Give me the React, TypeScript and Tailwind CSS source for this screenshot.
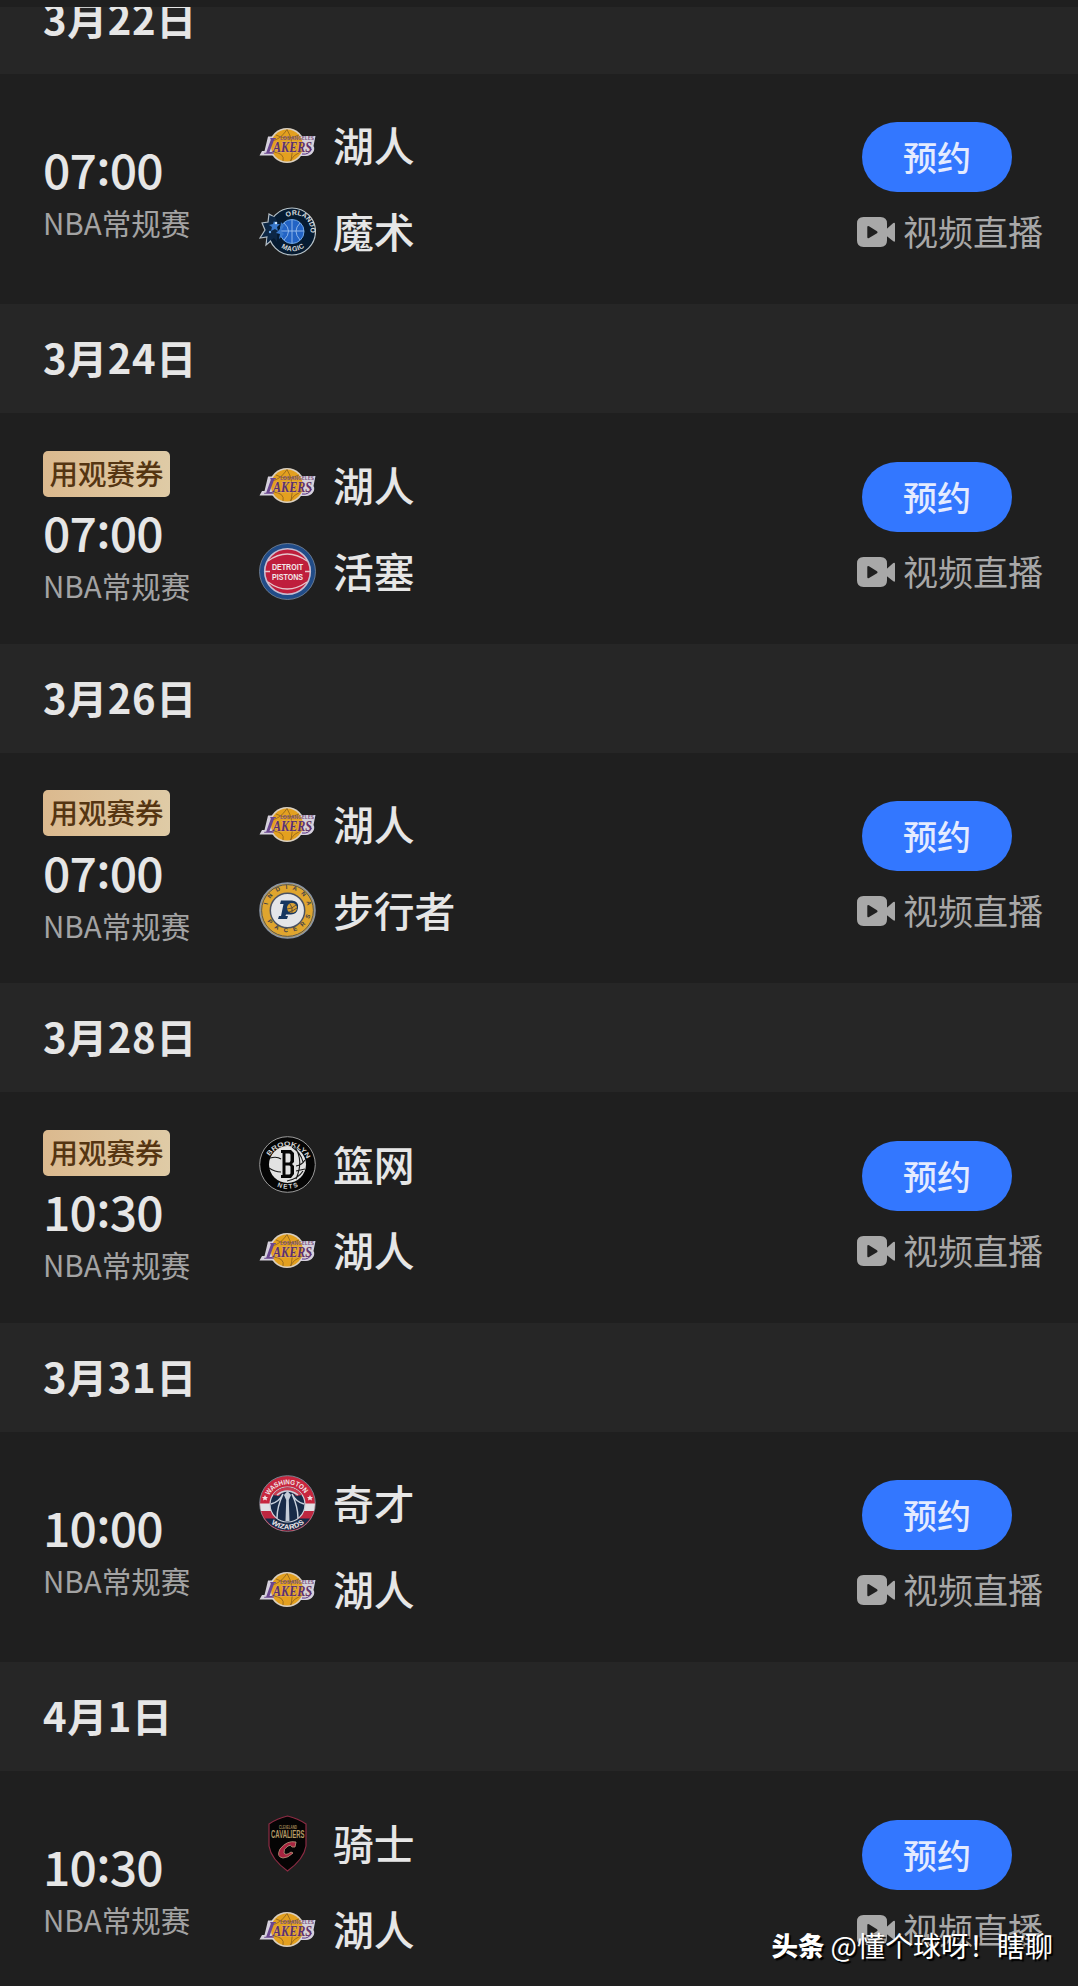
import React from 'react';

type TeamKey = 'lakers' | 'magic' | 'pistons' | 'pacers' | 'nets' | 'wizards' | 'cavaliers';

interface Match {
  date: string;
  time: string;
  needsTicket?: boolean;
  teams: [TeamKey, TeamKey];
}

const TEAM_NAMES: Record<TeamKey, string> = {
  lakers: '湖人',
  magic: '魔术',
  pistons: '活塞',
  pacers: '步行者',
  nets: '篮网',
  wizards: '奇才',
  cavaliers: '骑士',
};

const MATCHES: Match[] = [
  { date: '3月22日', time: '07:00', teams: ['lakers', 'magic'] },
  { date: '3月24日', time: '07:00', needsTicket: true, teams: ['lakers', 'pistons'] },
  { date: '3月26日', time: '07:00', needsTicket: true, teams: ['lakers', 'pacers'] },
  { date: '3月28日', time: '10:30', needsTicket: true, teams: ['nets', 'lakers'] },
  { date: '3月31日', time: '10:00', teams: ['wizards', 'lakers'] },
  { date: '4月1日', time: '10:30', teams: ['cavaliers', 'lakers'] },
];

const LakersLogo = () => (
  <>
    <circle cx="28" cy="28.5" r="17.6" fill="#d9cfc0" />
    <path d="M9 19.500H19L18 24H38L39 19H56.500L54.500 29C57 33 53 39 47 39H40L37 36H20L18 38.500H.5L3 34H5.500Z" fill="#d5d0dc" />
    <circle cx="28" cy="28.5" r="16" fill="#e3a01f" />
    <path d="M17 18Q28 24 40 18M13 24Q22 22 28 12.500M28 12.500Q36 25 32 44M14 35Q26 36 24 44M43 34Q34 38 31 44" fill="none" stroke="#8a5f1c" strokeWidth=".8" />
    <text x="21" y="23" fontSize="4.500" fontWeight="700" textLength="34" lengthAdjust="spacingAndGlyphs" fill="#76547e">LOS ANGELES</text>
    <path d="M11.500 21H17L16.500 22.200H15.300L10.500 35H12.500L15.500 33L14.500 36.800H5L5.500 35.800H7.200L12 22.200H11Z" fill="#6a4690" />
    <g fontFamily="Liberation Serif, serif" fontStyle="italic" fontWeight="700" fontSize="15">
      <text x="14" y="35" textLength="39" lengthAdjust="spacingAndGlyphs" fill="#5b2f6f" stroke="#e0c08e" strokeWidth=".5" paintOrder="stroke">AKERS</text>
    </g>
    <path d="M43 37Q50 38 52.500 32" fill="none" stroke="#5b3385" strokeWidth="1" />
  </>
);

const MagicLogo = () => (
  <>
    <path d="M17 15L10 11L9 19L3 20L6 27L1 35L8 34L7 42L14 36L22 44L20 12Z" fill="#102b48" stroke="#b3bdc5" strokeWidth="1.200" />
    <circle cx="33" cy="28.5" r="23.500" fill="#061b31" stroke="#b8c4ca" strokeWidth="1.200" />
    <path d="M16 14L11 13L10 20L5 21L8 28L3 33.500L9 32.500L8 39.500L15 35L18 39V18Z" fill="#0d2745" />
    <circle cx="33" cy="28.5" r="12" fill="#2263c5" stroke="#6fa8e8" />
    <path d="M21.500 28H45M33 17V40M25 20Q34 28 25 37M41 20Q33 28 41 37" fill="none" stroke="#a7c9f2" strokeWidth=".8" />
    <path d="M15 18L17 21L21 21L18 24L19 28L16 26L12 28L13 24L10 22L14 21ZM22 19L25 23L22 28L25 31L20 36L21 31L17 30L21 26Z" fill="#3979cc" />
    <circle cx="17" cy="20" r="1.300" fill="#c7e3ff" />
    <circle cx="11" cy="29" r="1.200" fill="#6fa9e8" />
    <path id="magic-top" d="M28 14.500A15 15 0 0 1 44.500 40" fill="none" />
    <path id="magic-bottom" d="M19 42A20 20 0 0 0 48 42" fill="none" />
    <g fontFamily="Liberation Sans, sans-serif" fontWeight="700" fontSize="7" fill="#d8dddf">
      <text><textPath href="#magic-top" textLength="35" lengthAdjust="spacingAndGlyphs">ORLANDO</textPath></text>
      <text><textPath href="#magic-bottom" startOffset="4" textLength="25">MAGIC</textPath></text>
    </g>
  </>
);

const PistonsLogo = () => (
  <>
    <circle cx="28.5" cy="28.5" r="28" fill="#214c88" stroke="#78899e" strokeWidth=".8" />
    <circle cx="28.5" cy="28.5" r="22.800" fill="#bf1e3c" stroke="#c9bdd0" strokeWidth="1.600" />
    <path d="M9 18Q28 4 48 18M9 39Q28 53 48 39M6 28.500H11M46 28.500H51" fill="none" stroke="#e6c5cb" strokeWidth="1.300" />
    <g fontFamily="Liberation Sans, sans-serif" fontWeight="700" fontSize="9.500" fill="#f2eaeb">
      <text x="13" y="27" textLength="31" lengthAdjust="spacingAndGlyphs">DETROIT</text>
      <text x="13" y="36.500" textLength="31" lengthAdjust="spacingAndGlyphs">PISTONS</text>
    </g>
  </>
);

const PacersLogo = () => (
  <>
    <circle cx="28.5" cy="28.5" r="27.500" fill="#dfa52e" stroke="#8995a5" strokeWidth="1.600" />
    <circle cx="28.5" cy="28.5" r="25.900" fill="none" stroke="#294064" strokeWidth=".8" />
    <circle cx="28.5" cy="28.5" r="17.200" fill="#e4e5e8" stroke="#4b5262" strokeWidth="1.500" />
    <path id="pacers-top" d="M8.500 27A20 20 0 0 1 48.500 27" fill="none" />
    <path id="pacers-bottom" d="M5 31A24 24 0 0 0 52 31" fill="none" />
    <g fontFamily="Liberation Sans, sans-serif" fontWeight="700" fontSize="6" fill="#3f4148">
      <text><textPath href="#pacers-top" startOffset="4" textLength="55">INDIANA</textPath></text>
      <text><textPath href="#pacers-bottom" startOffset="9" textLength="54">PACERS</textPath></text>
    </g>
    <path d="M22 18.500H33Q40 19 39 26Q38 33 31 32.500H27L26.500 34H29L28 37H19L20 34H22L24.500 22H21Z" fill="#18375f" />
    <circle cx="33" cy="26" r="5" fill="#d9a133" />
    <path d="M28 27Q33 27 37 23M30 30Q34 29 38 26M31 22Q34 25 33 31" fill="none" stroke="#493f35" strokeWidth=".8" />
  </>
);

const NetsLogo = () => (
  <>
    <circle cx="28.5" cy="28.5" r="27.800" fill="#050505" stroke="#9c9c9c" strokeWidth="1" />
    <circle cx="28.5" cy="28.5" r="18.500" fill="#e2e2e2" />
    <path d="M33 11Q42 17 44 26M36 11Q45 25 37 43M11 22Q18 20 22 23M10 32Q16 36 22 36M37 30Q43 29 46 24M37 35L46 33M28 45Q39 43 44 35" fill="none" stroke="#151515" strokeWidth="1.100" />
    <path id="nets-top" d="M8.500 26A20.500 20.500 0 0 1 48.500 26" fill="none" />
    <path id="nets-bottom" d="M14.500 48.500A25 25 0 0 0 42.500 48.500" fill="none" />
    <g fontFamily="Liberation Sans, sans-serif" fontWeight="700" fontSize="6.500" fill="#d5d5d5">
      <text><textPath href="#nets-top" startOffset="6" textLength="46" lengthAdjust="spacingAndGlyphs">BROOKLYN</textPath></text>
      <text><textPath href="#nets-bottom" startOffset="4" textLength="22">NETS</textPath></text>
    </g>
    <path fillRule="evenodd" d="M22 14H32L35 17V26L33 28L35 30V38L32 42H22V39H23.500V17H22ZM26.500 17.500V26.500H30.500L31.500 25V18.500L30.500 17.500ZM26.500 29.500V38.500H30.500L31.500 37.500V30.500L30.500 29.500Z" fill="#060606" />
  </>
);

const WizardsLogo = () => (
  <>
    <circle cx="28.5" cy="28.5" r="27.800" fill="#c8263e" stroke="#77818d" strokeWidth="1" />
    <path d="M1 28.500H56A27.500 27.500 0 0 1 1 28.500Z" fill="#e1e1e5" />
    <path d="M2 36H55A27.500 27.500 0 0 1 2 36Z" fill="#bd2740" />
    <path d="M6 43.500H51A27 27 0 0 1 6 43.500Z" fill="#172a48" />
    <circle cx="28.5" cy="29.500" r="17.500" fill="#172a48" stroke="#cfd3db" strokeWidth="1.200" />
    <path d="M14 20A17.500 17.500 0 0 1 43 20L37 21A10 10 0 0 0 20 21Z" fill="#c93c50" />
    <path d="M18 20Q28 12 39 20M12 29Q20 27 24 19Q18 32 18 43M45 29Q37 27 33 19Q39 32 39 43" fill="none" stroke="#c9d1dd" strokeWidth="1.500" />
    <path d="M25 20L28.500 16L32 20L29.800 25L30.500 46H26.500L27.200 25Z" fill="#c3ccd8" />
    <path id="wizards-top" d="M9 23.500A20.500 20.500 0 0 1 48 23.500" fill="none" />
    <path id="wizards-bottom" d="M8 44A25.500 25.500 0 0 0 49 44" fill="none" />
    <g fontFamily="Liberation Sans, sans-serif" fontWeight="700" fontSize="7" fill="#f0e8ea">
      <text><textPath href="#wizards-top" startOffset="3" textLength="43" lengthAdjust="spacingAndGlyphs">WASHINGTON</textPath></text>
      <text><textPath href="#wizards-bottom" startOffset="6" textLength="36" lengthAdjust="spacingAndGlyphs">WIZARDS</textPath></text>
    </g>
    <path d="M6 20L7 22H9L7.500 23.500L8 25.500L6 24.500L4 25.500L4.500 23.500L3 22H5ZM51 20L52 22H54L52.500 23.500L53 25.500L51 24.500L49 25.500L49.500 23.500L48 22H50Z" fill="#f0dfe2" />
  </>
);

const CavaliersLogo = () => (
  <>
    <path d="M28.500 1Q39 3.500 47 9V31Q45 44 28.500 56Q12 44 10 31V9Q18 3.500 28.500 1Z" fill="#050404" stroke="#8b2b43" strokeWidth="1.200" />
    <g fontFamily="Liberation Sans, sans-serif" fontWeight="700">
      <text x="20" y="13.500" fontSize="4.500" textLength="18" lengthAdjust="spacingAndGlyphs" fill="#a38a58">CLEVELAND</text>
      <text x="12" y="23" fontSize="10.500" textLength="33.500" lengthAdjust="spacingAndGlyphs" fill="#b49a66">CAVALIERS</text>
    </g>
    <path d="M36 32L37 27Q28 25 21 34Q17 42 24 43Q29 43 34 38L32 37Q27 41 25 38Q24 34 29 31Q32 29 33 32Z" fill="#a92440" stroke="#b48c75" strokeWidth=".9" />
  </>
);

const LOGOS: Record<TeamKey, React.FC> = {
  lakers: LakersLogo,
  magic: MagicLogo,
  pistons: PistonsLogo,
  pacers: PacersLogo,
  nets: NetsLogo,
  wizards: WizardsLogo,
  cavaliers: CavaliersLogo,
};

const VideoIcon: React.FC<{ className?: string }> = ({ className }) => (
  <svg viewBox="0 0 38 30" className={className} fill="currentColor">
    <path
      fillRule="evenodd"
      d="M6.500 0H23.500Q30 0 30 6.500V23.500Q30 30 23.500 30H6.500Q0 30 0 23.500V6.500Q0 0 6.500 0ZM12 9.300Q10.300 8.500 10.300 10.300V20Q10.300 22 12 21L20 16.200Q21.300 15.200 20 14.200Z"
    />
    <path d="M29 12.500L36.300 6Q38 5 38 7V23.500Q38 25.500 36.300 24.300L29 18.500Z" />
  </svg>
);

const TeamRow: React.FC<{ team: TeamKey }> = ({ team }) => {
  const Logo = LOGOS[team];

  return (
    <div className="flex items-center h-[57px]">
      <svg viewBox="0 0 57 57" className="w-[57px] h-[57px] shrink-0">
        <Logo />
      </svg>
      <span className="ml-[17px] pb-[2px] text-[40.8px] leading-[57px] font-medium text-[#e6e6e6]">{TEAM_NAMES[team]}</span>
    </div>
  );
};

const MatchCard: React.FC<{ match: Match }> = ({ match }) => {
  const [hours, minutes] = match.time.split(':');

  return (
    <div className="flex h-[230.5px] shrink-0 pl-[43px]">
      <div className={`flex flex-col items-start justify-center w-[216px] ${match.needsTicket ? 'pt-[1.5px]' : 'pt-1'}`}>
        {match.needsTicket && (
          <span className="flex items-center justify-center w-[127px] h-[46px] mb-[4.5px] pb-[2px] rounded-[5px] bg-linear-to-r from-[#dbb98e] to-[#dfcba6] text-[28.5px] leading-none font-medium text-[#553512]">
            用观赛券
          </span>
        )}
        <div className="text-[48px] leading-[60px] tracking-[-0.8px] font-medium text-[#e6e6e6]">
          {hours}
          <span className="inline-block -translate-y-[4px]">:</span>
          {minutes}
        </div>
        <div className="pt-[2px] text-[29.5px] leading-[44px] text-[#a3a3a3]">NBA常规赛</div>
      </div>

      <div className="flex flex-col flex-1 gap-[29px] pt-[43.5px]">
        <TeamRow team={match.teams[0]} />
        <TeamRow team={match.teams[1]} />
      </div>

      <div className="flex flex-col items-start w-[187px] mr-[34px] pt-[48.5px]">
        <button className="w-[150px] h-[70px] ml-[5px] rounded-full bg-[#3377ff] text-[34px] leading-none font-medium text-[#e4ebff]">
          预约
        </button>
        <div className="flex items-center mt-[16px] text-[#a8a8a8]">
          <VideoIcon className="w-[38px] h-[30px]" />
          <span className="ml-2 pb-[3px] text-[35px] leading-[45px] whitespace-nowrap">视频直播</span>
        </div>
      </div>
    </div>
  );
};

const App: React.FC = () => {
  return (
    <div className="relative w-[1078px] h-[1986px] overflow-hidden bg-[#1f1f1f] pt-[7px] font-['Noto_Sans_CJK_SC',sans-serif]">
      <div className="flex flex-col h-[1979px] overflow-hidden">
        {MATCHES.map((match, index) => (
          <React.Fragment key={match.date}>
            <div className={`flex items-center h-[109px] shrink-0 bg-[#262626] pl-[43px] pb-[3px] ${index === 0 ? '-mt-[42.5px]' : ''}`}>
              <h2 className="text-[40px] leading-none tracking-[0.6px] font-bold text-[#e6e6e6]">{match.date}</h2>
            </div>
            <MatchCard match={match} />
          </React.Fragment>
        ))}
      </div>

      <div className="absolute right-[25px] bottom-[21px] flex items-center gap-[6px] leading-[40px] text-white [text-shadow:2px_2px_1px_#000]">
        <span className="text-[26.5px] font-black">头条</span>
        <span className="text-[28px]">@懂个球呀！瞎聊</span>
      </div>
    </div>
  );
};

export default App;
